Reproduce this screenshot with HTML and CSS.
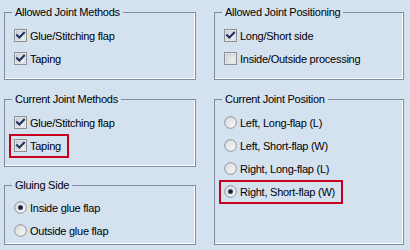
FILE: index.html
```html
<!DOCTYPE html>
<html lang="en">
<head>
<meta charset="utf-8">
<title>Joint settings</title>
<link rel="stylesheet" href="styles.css">
</head>
<body>
<main class="panel">
  <fieldset class="group g-am">
    <legend>Allowed Joint Methods</legend>
    <div class="opts">
      <div class="opt"><label class="choice"><svg class="box" viewBox="0 0 13 13"><use href="#cb-on"/></svg><span>Glue/Stitching flap</span></label></div>
      <div class="opt"><label class="choice"><svg class="box" viewBox="0 0 13 13"><use href="#cb-on"/></svg><span>Taping</span></label></div>
    </div>
  </fieldset>

  <fieldset class="group g-ap">
    <legend>Allowed Joint Positioning</legend>
    <div class="opts">
      <div class="opt"><label class="choice"><svg class="box" viewBox="0 0 13 13"><use href="#cb-on"/></svg><span>Long/Short side</span></label></div>
      <div class="opt"><label class="choice"><svg class="box" viewBox="0 0 13 13"><use href="#cb-off"/></svg><span>Inside/Outside processing</span></label></div>
    </div>
  </fieldset>

  <fieldset class="group g-cm">
    <legend>Current Joint Methods</legend>
    <div class="opts">
      <div class="opt"><label class="choice"><svg class="box" viewBox="0 0 13 13"><use href="#cb-on"/></svg><span>Glue/Stitching flap</span></label></div>
      <div class="opt"><label class="choice marked"><svg class="box" viewBox="0 0 13 13"><use href="#cb-on"/></svg><span>Taping</span></label></div>
    </div>
  </fieldset>

  <fieldset class="group g-cp">
    <legend>Current Joint Position</legend>
    <div class="opts">
      <div class="opt"><label class="choice"><svg class="box" viewBox="0 0 13 13"><use href="#rb-off"/></svg><span>Left, Long-flap (L)</span></label></div>
      <div class="opt"><label class="choice"><svg class="box" viewBox="0 0 13 13"><use href="#rb-off"/></svg><span>Left, Short-flap (W)</span></label></div>
      <div class="opt"><label class="choice"><svg class="box" viewBox="0 0 13 13"><use href="#rb-off"/></svg><span>Right, Long-flap (L)</span></label></div>
      <div class="opt"><label class="choice marked"><svg class="box" viewBox="0 0 13 13"><use href="#rb-on"/></svg><span>Right, Short-flap (W)</span></label></div>
    </div>
  </fieldset>

  <fieldset class="group g-gs">
    <legend>Gluing Side</legend>
    <div class="opts">
      <div class="opt"><label class="choice"><svg class="box" viewBox="0 0 13 13"><use href="#rb-on"/></svg><span>Inside glue flap</span></label></div>
      <div class="opt"><label class="choice"><svg class="box" viewBox="0 0 13 13"><use href="#rb-off"/></svg><span>Outside glue flap</span></label></div>
    </div>
  </fieldset>
</main>

<svg class="defs" width="0" height="0" aria-hidden="true">
  <defs>
    <linearGradient id="cbfill" x1="0" y1="0" x2="1" y2="1">
      <stop offset="0" stop-color="#cdd1d6"/>
      <stop offset="1" stop-color="#f7f7f7"/>
    </linearGradient>
    <linearGradient id="rbfill" x1="0" y1="0" x2="1" y2="1">
      <stop offset="0" stop-color="#d6d8db"/>
      <stop offset="1" stop-color="#fbfbfb"/>
    </linearGradient>
    <g id="cb-off">
      <rect x="0.5" y="0.5" width="12" height="12" fill="#f4f4f4" stroke="#8b8e92"/>
      <rect x="2" y="2" width="9" height="9" fill="url(#cbfill)" stroke="#bfc3c8" stroke-width="0.6"/>
    </g>
    <g id="cb-on">
      <use href="#cb-off"/>
      <path d="M3 6.2 L5.4 8.6 L10 3.8" fill="none" stroke="#1d3461" stroke-width="2.1" stroke-linecap="square"/>
    </g>
    <g id="rb-off">
      <circle cx="6.5" cy="6.5" r="5.8" fill="url(#rbfill)" stroke="#8e9196" stroke-width="1"/>
    </g>
    <g id="rb-on">
      <use href="#rb-off"/>
      <circle cx="6.5" cy="6.5" r="2.6" fill="#47556a"/>
      <circle cx="6.5" cy="6.5" r="1.6" fill="#141c2a"/>
    </g>
  </defs>
</svg>
</body>
</html>
```

FILE: styles.css
```css
html, body {
  margin: 0;
  padding: 0;
  background: #d4e2f0;
}

body {
  font-family: "Liberation Sans", Arial, sans-serif;
  font-size: 11px;
  letter-spacing: -0.25px;
  color: #000;
  width: 410px;
  height: 250px;
  overflow: hidden;
}

.panel {
  display: grid;
  grid-template-columns: 192px 190px;
  grid-template-rows: 75px 74px 66px;
  column-gap: 18px;
  row-gap: 12px;
  padding: 6px 0 0 4px;
}

.group {
  margin: 0;
  padding: 0 0 0 9px;
  min-width: 0;
  box-sizing: border-box;
  border: 1px solid #7f8ca0;
  box-shadow: inset -1px -1px 0 #ffffff;
}

.group legend {
  margin-left: -2px;
  padding: 0 3px;
  line-height: 13px;
  height: 13px;
  font-size: 11px;
}

.g-am { grid-column: 1; grid-row: 1; height: 74px; }
.g-ap { grid-column: 2; grid-row: 1; height: 74px; }
.g-cm { grid-column: 1; grid-row: 2; }
.g-cp { grid-column: 2; grid-row: 2 / span 2; }
.g-gs { grid-column: 1; grid-row: 3; }

.opts {
  padding-top: 5px;
}

.g-gs .opts {
  padding-top: 4px;
}

.opt {
  height: 23px;
  display: flex;
  align-items: center;
}

.choice {
  display: inline-flex;
  align-items: center;
  gap: 3px;
  height: 14px;
  white-space: nowrap;
}

.box {
  width: 13px;
  height: 13px;
  flex: none;
  display: block;
}

.marked {
  outline: 2px solid #c4001c;
  outline-offset: 3px;
  padding-right: 3px;
}

.defs {
  position: absolute;
  width: 0;
  height: 0;
  overflow: hidden;
}
```
